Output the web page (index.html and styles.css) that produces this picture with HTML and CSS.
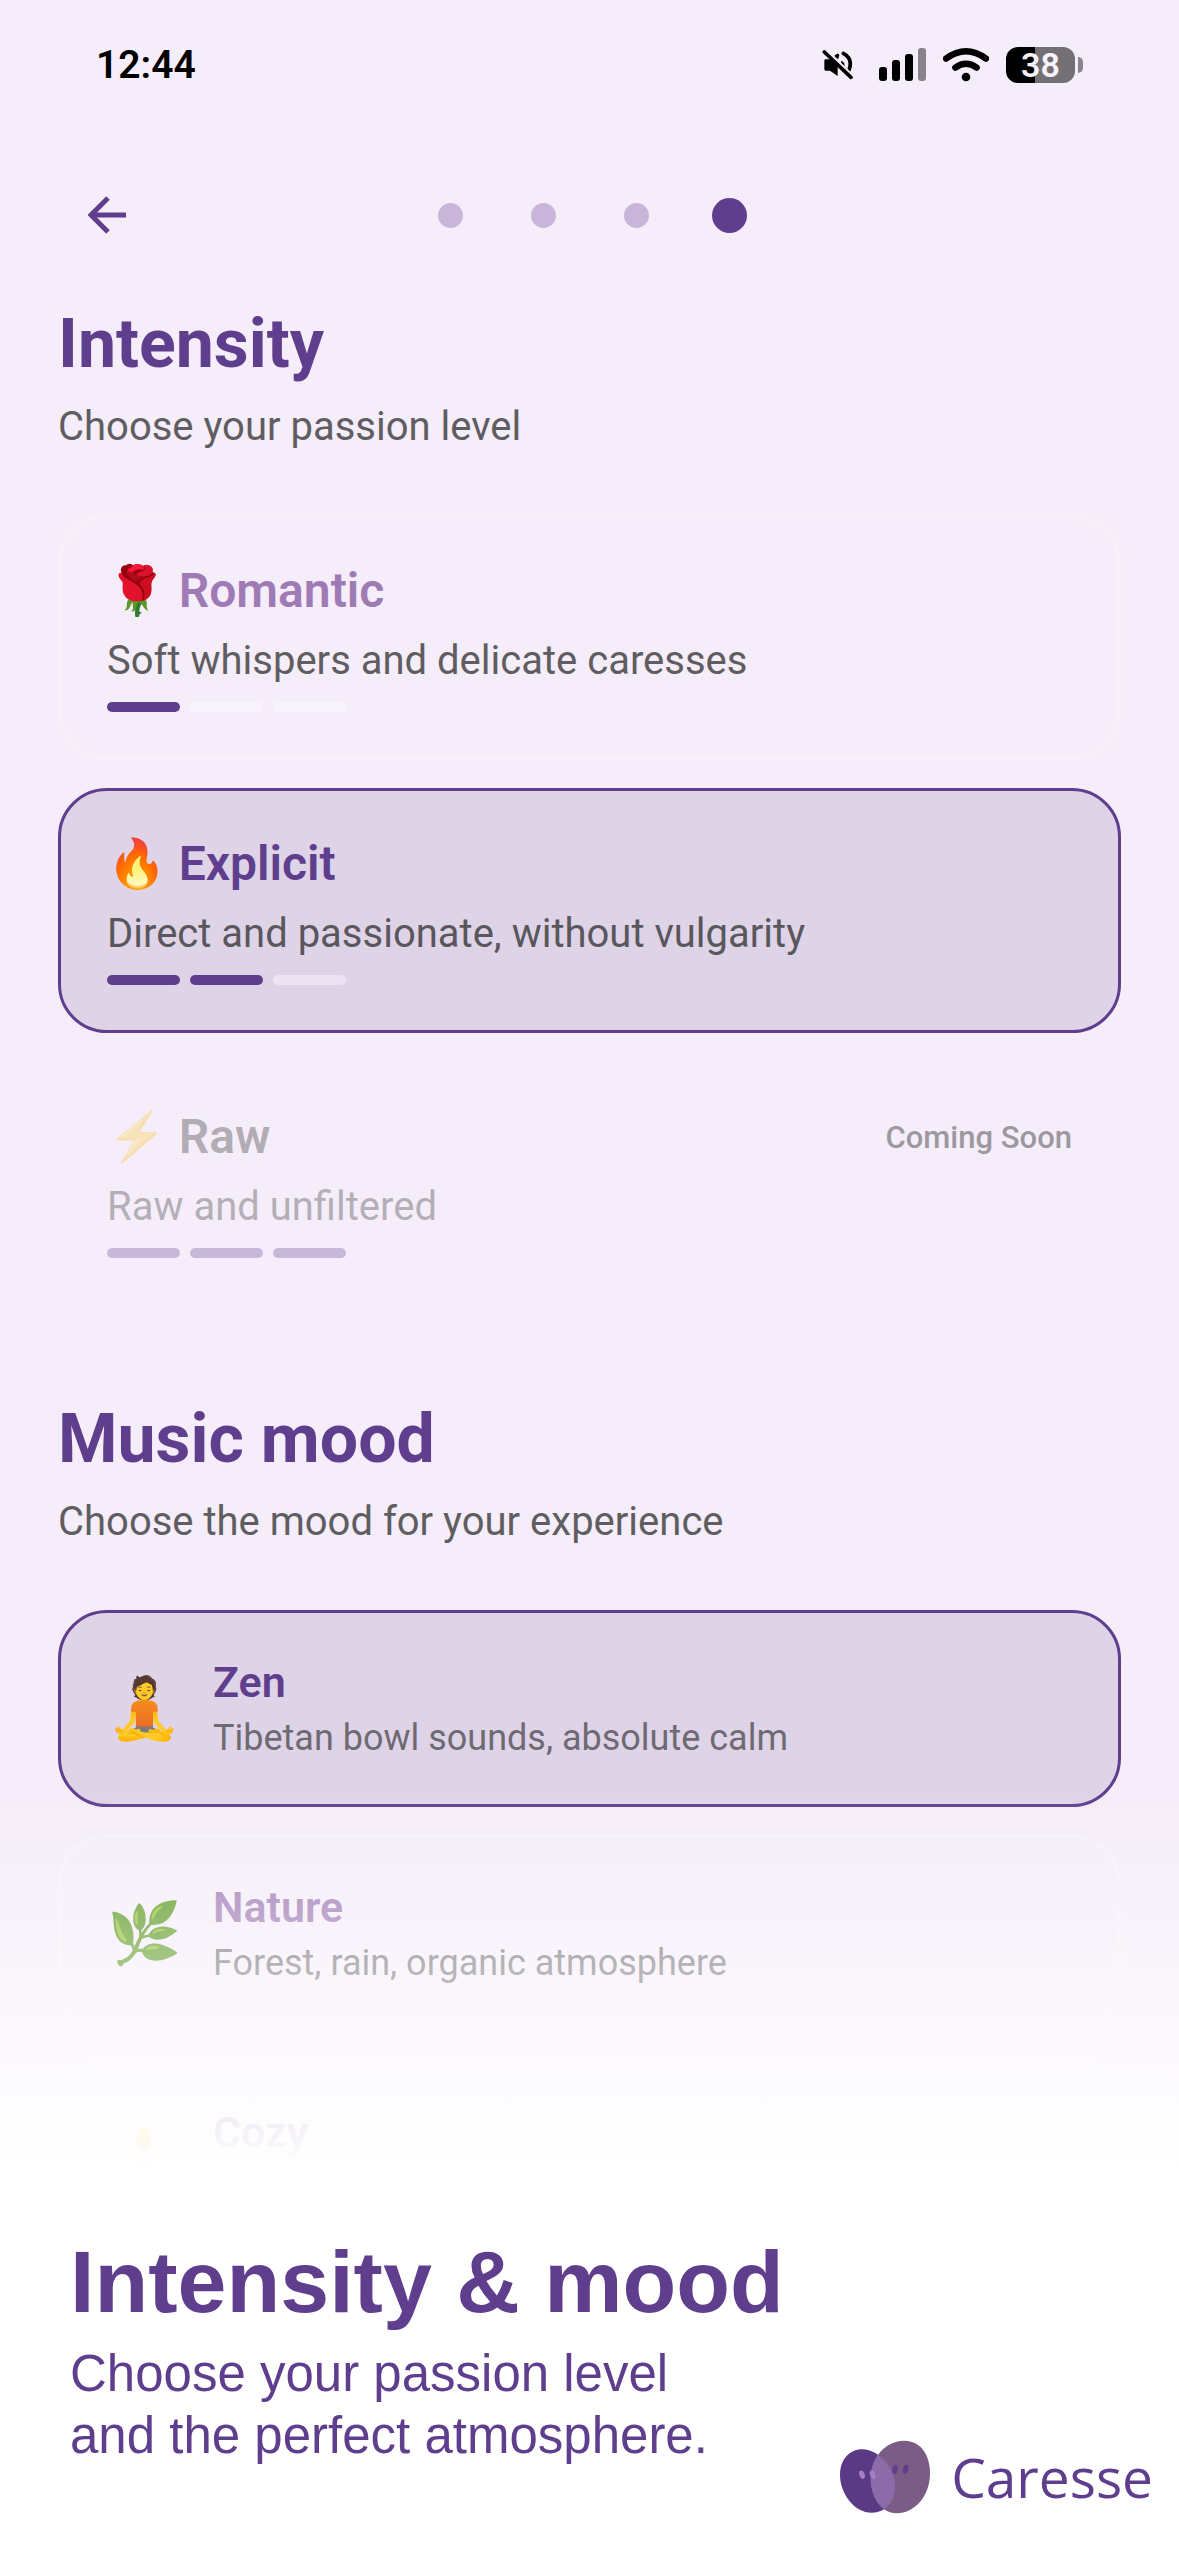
FILE: index.html
```html
<!DOCTYPE html>
<html lang="en">
<head>
<meta charset="utf-8">
<meta name="viewport" content="width=device-width, initial-scale=1">
<title>Caresse</title>
<link rel="stylesheet" href="styles.css">
</head>
<body>
<div class="app">
  <header class="status">
    <time class="clock">12:44</time>
    <div class="indicators">
      <svg class="mute" width="31" height="34" viewBox="0 0 93 102" aria-hidden="true">
        <path d="M7 38q0-4 4-4h13l23-18v68L24 68H11q-4 0-4-4z"/>
        <path d="M42 20q8-6 10 2l-3 10-8-6zM58 38q14 6 8 20l-10-6z"/>
        <path class="stroke" d="M64 16q30 16 17 50"/>
        <path class="slash" d="M10 4l80 78"/>
        <path class="stroke" d="M7 12l80 76"/>
      </svg>
      <svg width="47" height="34" viewBox="0 0 47 34" aria-hidden="true">
        <rect x="0" y="19" width="8" height="14" rx="3"/>
        <rect x="13" y="12" width="8" height="21" rx="3"/>
        <rect x="26" y="6" width="8" height="27" rx="3"/>
        <rect class="dim" x="39" y="0" width="8" height="33" rx="3"/>
      </svg>
      <svg class="wifi" width="46" height="34" viewBox="0 0 138 102" aria-hidden="true">
        <path d="M9 32Q69-12 129 32M37 59q32-23 64 0"/>
        <circle cx="69" cy="87" r="13"/>
      </svg>
      <div class="battery"><span class="charge">38</span><span class="nub"></span></div>
    </div>
  </header>

  <nav class="steps" aria-label="Progress">
    <button class="back" type="button" aria-label="Back">
      <svg width="38" height="38" viewBox="0 0 38 38" aria-hidden="true"><path d="M38 19H4M20 2L3 19l17 17"/></svg>
    </button>
    <ol class="dots">
      <li></li><li></li><li></li><li class="current" aria-current="step"></li>
    </ol>
  </nav>

  <main>
    <section class="section">
      <h1 class="title">Intensity</h1>
      <p class="subtitle">Choose your passion level</p>
      <div class="cards">
        <label class="card">
          <input class="pick" type="radio" name="intensity">
          <span class="name">🌹 Romantic</span>
          <span class="desc">Soft whispers and delicate caresses</span>
          <span class="level"><i class="on"></i><i></i><i></i></span>
        </label>
        <label class="card selected">
          <input class="pick" type="radio" name="intensity" checked>
          <span class="name">🔥 Explicit</span>
          <span class="desc">Direct and passionate, without vulgarity</span>
          <span class="level"><i class="on"></i><i class="on"></i><i></i></span>
        </label>
        <label class="card locked">
          <input class="pick" type="radio" name="intensity" disabled>
          <span class="row"><span class="name"><span class="glyph">⚡</span> Raw</span><span class="soon">Coming Soon</span></span>
          <span class="desc">Raw and unfiltered</span>
          <span class="level"><i class="on"></i><i class="on"></i><i class="on"></i></span>
        </label>
      </div>
    </section>

    <section class="section">
      <h2 class="title">Music mood</h2>
      <p class="subtitle">Choose the mood for your experience</p>
      <div class="cards">
        <label class="card mood selected">
          <input class="pick" type="radio" name="mood" checked>
          <span class="emoji">🧘</span>
          <span class="text"><span class="name">Zen</span><span class="desc">Tibetan bowl sounds, absolute calm</span></span>
        </label>
        <label class="card mood">
          <input class="pick" type="radio" name="mood">
          <span class="emoji">🌿</span>
          <span class="text"><span class="name">Nature</span><span class="desc">Forest, rain, organic atmosphere</span></span>
        </label>
        <label class="card mood">
          <input class="pick" type="radio" name="mood">
          <span class="emoji">🕯️</span>
          <span class="text"><span class="name">Cozy</span></span>
        </label>
      </div>
    </section>
  </main>

  <footer class="caption">
    <div class="pitch">
      <h2 class="headline">Intensity &amp; mood</h2>
      <p class="tagline">Choose your passion level<br>and the perfect atmosphere.</p>
    </div>
    <div class="brand">
      <svg width="92" height="74" viewBox="0 0 276 222" aria-hidden="true">
        <defs><clipPath id="left"><path id="l" d="M70 28C115 28 168 80 168 138C168 185 140 218 98 218C45 218 3 160 3 104C3 60 30 28 70 28Z"/></clipPath></defs>
        <use href="#l" fill="#5a3a84"/>
        <path d="M196 2C245 2 273 45 273 100C273 165 230 220 172 220C125 220 95 170 95 115C95 52 140 2 196 2Z" fill="#7b5c86"/>
        <g clip-path="url(#left)"><path d="M196 2C245 2 273 45 273 100C273 165 230 220 172 220C125 220 95 170 95 115C95 52 140 2 196 2Z" fill="#8b6ba8"/></g>
        <g fill="#a57fc0"><ellipse cx="69" cy="104" rx="8" ry="13" transform="rotate(-20 69 104)"/><ellipse cx="101" cy="104" rx="8" ry="13" transform="rotate(-20 101 104)"/></g>
        <g fill="#5f3e8e"><ellipse cx="168" cy="88" rx="8" ry="14" transform="rotate(16 168 88)"/><ellipse cx="200" cy="88" rx="8" ry="14" transform="rotate(16 200 88)"/></g>
      </svg>
      <span class="wordmark">Caresse</span>
    </div>
  </footer>
</div>
</body>
</html>
```
FILE: styles.css
```css
:root {
  --purple: #5f3e8e;
  --bg: #f5edf9;
}
* { box-sizing: border-box; }
body { margin: 0; background: #fff; }
h1, h2, p, ol { margin: 0; padding: 0; }

.app {
  position: relative;
  min-height: 100vh;
  overflow: hidden;
  background: var(--bg);
  font-family: Roboto, "Noto Color Emoji", sans-serif;
  font-size: 40px;
  color: #333;
}

/* Phone status bar */
.status {
  display: flex;
  justify-content: space-between;
  align-items: center;
  height: 130px;
  padding: 0 96px;
}
.clock { font-size: 39px; font-weight: 600; color: #000; }
.indicators { display: flex; align-items: center; gap: 17px; }
.mute { margin-right: 9px; }
.stroke { fill: none; stroke: #000; stroke-width: 11; stroke-linecap: round; }
.slash { stroke: var(--bg); stroke-width: 9; }
.dim { fill: #8a828d; }
.wifi path { fill: none; stroke: #000; stroke-width: 19; stroke-linecap: round; }
.battery { display: flex; align-items: center; gap: 3px; }
.charge {
  width: 69px;
  border-radius: 12px;
  background: linear-gradient(90deg, #000 42%, #737075 42%);
  font-size: 34px;
  line-height: 36px;
  font-weight: 600;
  text-align: center;
  color: #f8f3fa;
}
.nub { width: 5px; height: 16px; border-radius: 0 5px 5px 0; background: #8a828d; }

/* Step header */
.steps {
  display: grid;
  grid-template-columns: 1fr auto 1fr;
  align-items: center;
  height: 170px;
  padding: 0 88px;
}
.back { justify-self: start; display: flex; padding: 0; border: 0; background: none; }
.back path { fill: none; stroke: var(--purple); stroke-width: 5; }
.dots { display: flex; gap: 58px; list-style: none; }
.dots li { display: grid; place-items: center; width: 35px; height: 35px; }
.dots li::before { content: ""; width: 25px; height: 25px; border-radius: 50%; background: #c9b5d9; }
.dots .current::before { width: 35px; height: 35px; background: var(--purple); }

/* Sections */
.section { padding: 4px 58px 89px; }
.title { font-size: 68px; line-height: 80px; font-weight: 700; color: var(--purple); }
.subtitle { margin-top: 14px; line-height: 57px; opacity: .77; }
.cards { display: flex; flex-direction: column; gap: 28px; margin-top: 60px; }

.card {
  position: relative;
  display: flex;
  flex-direction: column;
  gap: 13px;
  padding: 45px 46px;
  border: 3px solid #f7f0fb;
  border-radius: 49px;
}
.card.selected { background: #dfd3e8; border-color: var(--purple); }
.pick { position: absolute; inset: 0; margin: 0; opacity: 0; }
.name { font-size: 48px; line-height: 56px; font-weight: 600; color: #9f7bb5; white-space: nowrap; }
.selected .name { color: var(--purple); }
.desc { line-height: 57px; opacity: .77; }
.level { display: flex; gap: 10px; }
.level i { width: 73px; height: 10px; border-radius: 5px; background: rgba(255, 255, 255, .4); }
.level .on { background: var(--purple); }

.row { display: flex; justify-content: space-between; align-items: center; }
.soon { font-size: 31px; font-weight: 500; opacity: .45; }
.locked { border-color: transparent; }
.locked .name { color: rgba(51, 51, 51, .36); }
.locked .glyph { color: #333; opacity: .3; }
.locked .desc { opacity: .33; }
.locked .level { opacity: .3; }

.mood { flex-direction: row; align-items: center; gap: 31px; }
.emoji { width: 75px; font-size: 60px; line-height: 72px; }
.text { display: flex; flex-direction: column; gap: 10px; min-height: 101px; }
.mood .name { font-size: 43px; line-height: 49px; }
.mood .desc { font-size: 36px; line-height: 42px; opacity: .65; }

/* Caption fading in over the foot of the list */
.caption {
  position: absolute;
  inset: auto 0 0;
  display: flex;
  justify-content: space-between;
  align-items: flex-end;
  padding: 442px 26px 42px 70px;
  background: linear-gradient(rgba(255, 255, 255, 0), #fff 380px);
  font-family: "Liberation Sans", Arial, sans-serif;
  color: var(--purple);
}
.pitch { padding-bottom: 47px; }
.headline { font-size: 88px; line-height: 100px; font-weight: 700; }
.tagline { margin-top: 11px; font-size: 51px; line-height: 62px; }
.brand { display: flex; align-items: center; gap: 20px; }
.wordmark { font-family: "Open Sans", sans-serif; font-size: 55px; line-height: 74px; }
```
